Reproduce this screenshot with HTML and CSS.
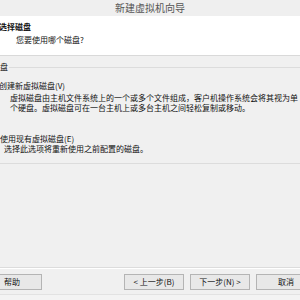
FILE: index.html
```html
<!DOCTYPE html>
<html lang="zh-CN">
<head>
    <meta charset="UTF-8">
    <title>新建虚拟机向导</title>
    <link rel="stylesheet" href="styles.css">
</head>
<body>
    <div class="dialog">
        <div class="titlebar">新建虚拟机向导</div>

        <div class="header">
            <div class="header-title">选择磁盘</div>
            <div class="header-sub">您要使用哪个磁盘?</div>
        </div>

        <fieldset class="group">
            <legend>磁盘</legend>
            <div class="option">创建新虚拟磁盘(V)</div>
            <div class="desc">虚拟磁盘由主机文件系统上的一个或多个文件组成，客户机操作系统会将其视为单<br>个硬盘。虚拟磁盘可在一台主机上或多台主机之间轻松复制或移动。</div>
            <div class="option option-second">使用现有虚拟磁盘(E)</div>
            <div class="desc desc-second">选择此选项将重新使用之前配置的磁盘。</div>
        </fieldset>

        <div class="spacer"></div>

        <div class="footer">
            <button class="btn">帮助</button>
            <div class="spacer"></div>
            <button class="btn">&lt; 上一步(B)</button>
            <button class="btn">下一步(N) &gt;</button>
            <button class="btn">取消</button>
        </div>
        <div class="bottom-strip"></div>
    </div>
</body>
</html>
```

FILE: styles.css
```css
body {
    margin: 0;
    width: 300px;
    height: 300px;
    overflow: hidden;
    background: #f0f0f0;
    font-family: "Noto Sans CJK SC", "Liberation Sans", sans-serif;
    font-size: 8px;
    color: #111;
}
.dialog {
    width: 344px;
    height: 300px;
    margin-left: -22px;
    display: flex;
    flex-direction: column;
}
.titlebar {
    height: 16px;
    line-height: 16px;
    text-align: center;
    font-size: 10px;
    color: #555;
    background: #efefef;
}
.header {
    background: white;
    height: 40px;
    box-sizing: border-box;
    padding: 6px 0 0 21px;
    border-bottom: 1px solid #d9d9d9;
}
.header-title {
    font-weight: bold;
    line-height: 10px;
}
.header-sub {
    line-height: 10px;
    margin-top: 3px;
    padding-left: 17px;
}
.group {
    margin: 6px 10px 0 10px;
    padding: 0 0 9px 0;
    border: 1px solid #dcdcdc;
    border-radius: 2px;
}
.group legend {
    line-height: 10px;
    padding: 0 1px;
    margin-left: 2px;
}
.option {
    line-height: 10px;
    margin-top: 9px;
    padding-left: 10px;
}
.option-second {
    margin-top: 22px;
    padding-left: 11px;
}
.desc {
    line-height: 9.5px;
    margin-top: 2px;
    padding-left: 21px;
    white-space: nowrap;
}
.desc-second {
    line-height: 10px;
    margin-top: 0;
    padding-left: 15px;
}
.spacer {
    flex: 1;
}
.footer {
    display: flex;
    gap: 6px;
    padding: 6px 6px 0 4px;
    height: 22px;
    box-sizing: border-box;
    border-top: 1px solid #dcdcdc;
    box-shadow: inset 0 1px 0 #fff;
    margin-bottom: 5px;
}
.btn {
    width: 60px;
    height: 16px;
    padding: 0;
    font-family: inherit;
    font-size: 8px;
    line-height: 14px;
    color: #111;
    background: #e8e8e8;
    border: 1px solid #b4b4b4;
    border-radius: 0;
}
.bottom-strip {
    height: 5px;
    border-top: 1px solid #e2e2e2;
    background: #f3f3f3;
}
```
